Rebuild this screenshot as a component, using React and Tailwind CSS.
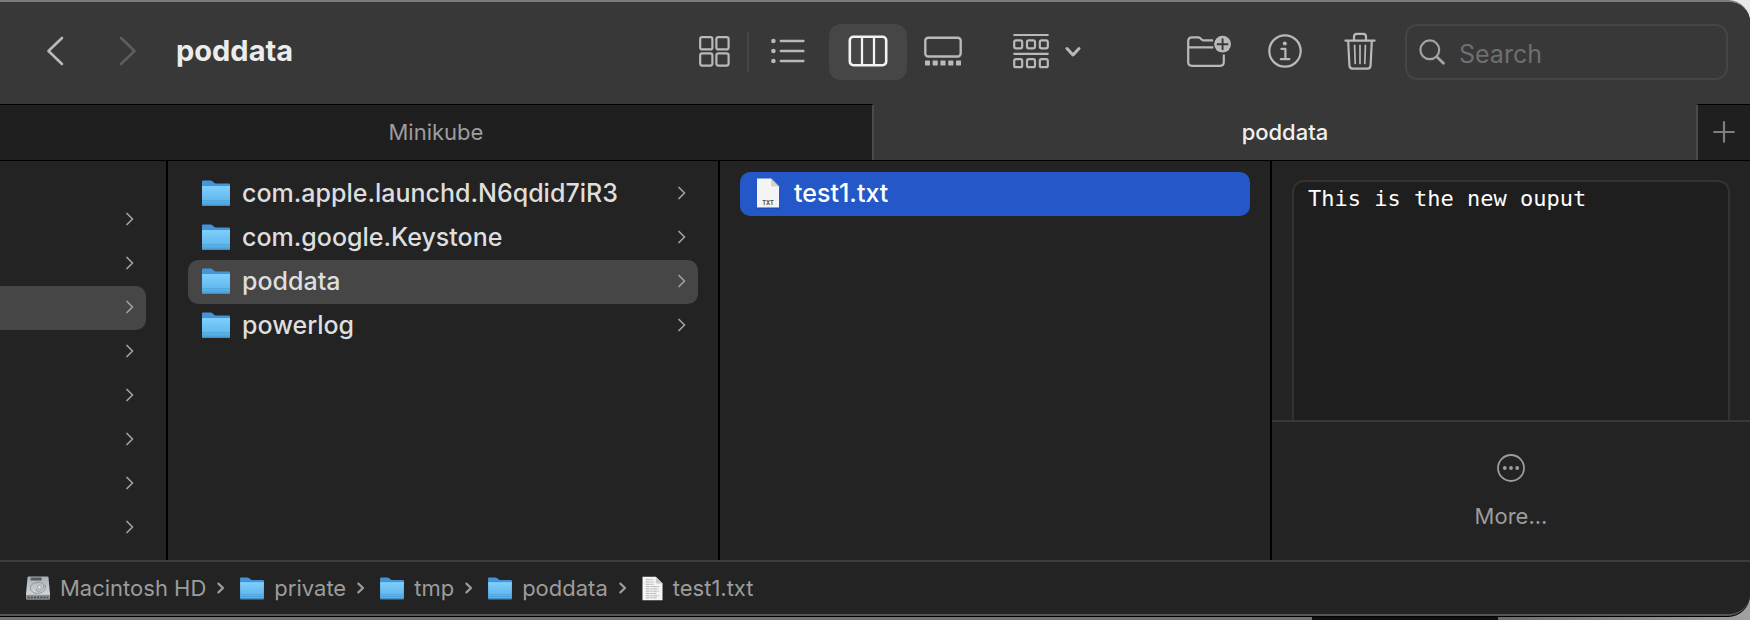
import React from "react";

function Chevron({ className = "" }) {
  return (
    <svg viewBox="0 0 8 14" fill="none" stroke="currentColor" strokeWidth="1.7" strokeLinecap="round" strokeLinejoin="round" className={"h-[14px] w-2 shrink-0 " + className} aria-hidden="true">
      <path d="M1 1.5 6.5 7 1 12.5" />
    </svg>
  );
}

function NavArrow({ flip = false }) {
  return (
    <svg viewBox="0 0 18 30" fill="none" stroke="currentColor" strokeWidth="2.6" strokeLinecap="round" strokeLinejoin="round" className="h-[30px] w-[18px]" aria-hidden="true">
      <path d={flip ? "M2 2 15.5 15 2 28" : "M16 2 2.5 15 16 28"} />
    </svg>
  );
}

function FolderIcon({ className }) {
  return (
    <svg viewBox="0 0 28 27" className={"shrink-0 " + className} aria-hidden="true">
      <defs>
        <linearGradient id="folderFront" x1="0" y1="0" x2="0" y2="1">
          <stop offset="0" stopColor="#7dcffb" />
          <stop offset="1" stopColor="#57aee9" />
        </linearGradient>
      </defs>
      <path d="M0 1.6Q0 .5 1.1.5H8.6Q9.6.5 10.4 1.2L12 2.7Q12.8 3.4 13.8 3.4H27Q28 3.4 28 4.4V10H0Z" fill="#4594d8" />
      <path d="M0 6.4H28V25Q28 26 27 26H1Q0 26 0 25Z" fill="url(#folderFront)" />
      <path d="M0 6.7H28" stroke="#8ad8ff" strokeWidth=".8" />
      <path d="M0 20.8H28M0 23H28" stroke="#4799d3" strokeWidth=".7" />
      <path d="M0 24.6H28V25Q28 26 27 26H1Q0 26 0 25Z" fill="#428fc8" />
    </svg>
  );
}

function TxtFileIcon() {
  return (
    <svg viewBox="0 0 28 32" className="h-8 w-7 shrink-0" aria-hidden="true">
      <path d="M3 2H17L25 10V31.6H3Z" fill="#143a86" opacity=".6" />
      <path d="M3 1.5H17L25 9.5V30.5H3Z" fill="#f4f4f4" />
      <path d="M17 1.5V8.5Q17 9.5 18 9.5H25Z" fill="#d4d4d4" />
      <path d="M17 1.5 25 9.5" stroke="#a9a9a9" strokeWidth=".8" />
      <text x="14" y="27.6" textAnchor="middle" fontSize="5.6" fontWeight="700" fontFamily="Inter, sans-serif" fill="#4a4a4a">TXT</text>
    </svg>
  );
}

function DocIcon() {
  return (
    <svg viewBox="0 0 22 26" className="h-[25px] w-[21px] shrink-0" aria-hidden="true">
      <path d="M.5 .8H14.5L21.5 7.8V25.2H.5Z" fill="#f5f5f5" />
      <path d="M14.5.8V6.8Q14.5 7.8 15.5 7.8H21.5Z" fill="#c9c9c9" />
      <path d="M4 3.8H12M4 6.2H12.5M4 8.6H12.5M4 11H18M4 13.4H17M4 15.8H18M4 18.2H15M4 20.6H18M4 22.8H16" stroke="#b0b0b0" strokeWidth="1" strokeDasharray="4 .7 2.4 .5" />
    </svg>
  );
}

function DriveIcon() {
  return (
    <svg viewBox="0 0 24 25" className="h-[25px] w-6 shrink-0" aria-hidden="true">
      <defs>
        <linearGradient id="drive" x1="0" y1="0" x2="0" y2="1">
          <stop offset="0" stopColor="#a9b0b4" />
          <stop offset="1" stopColor="#d3d8db" />
        </linearGradient>
      </defs>
      <path d="M2.6.5H21.4Q22.3.5 22.5 1.6L24 18V19.6H0V18L1.5 1.6Q1.7.5 2.6.5Z" fill="url(#drive)" />
      <path d="M0 18.8H24V22.6Q24 23.8 22.8 23.8H1.2Q0 23.8 0 22.6Z" fill="#8d9498" />
      <path d="M1.5 21.5H22.5" stroke="#4b4f52" strokeWidth="2.2" strokeDasharray="2.2 1" />
      <rect x="4.6" y="1.6" width="11" height="3" rx=".6" fill="#555b5f" />
      <path d="M19 8.5Q21 14.5 15 16.8Q8 18.8 5 14.5Q3 10 7.5 7.4Q11 5.8 14.5 6.4M14.5 6.4Q19 8 17.5 12Q15.5 15.6 11.5 15.4Q9 14.6 11 12.6" fill="none" stroke="#8b9297" strokeWidth=".9" />
      <circle cx="13.4" cy="11.2" r="1.8" fill="#dfe3e5" stroke="#8b9297" strokeWidth=".6" />
    </svg>
  );
}

function GridIcon() {
  return (
    <svg viewBox="0 0 31 31" fill="none" stroke="currentColor" strokeWidth="2.2" className="h-[31px] w-[31px]" aria-hidden="true">
      <rect x="1.2" y="1.2" width="12.2" height="12.2" rx="2" />
      <rect x="17.4" y="1.2" width="12.2" height="12.2" rx="2" />
      <rect x="1.2" y="17.4" width="12.2" height="12.2" rx="2" />
      <rect x="17.4" y="17.4" width="12.2" height="12.2" rx="2" />
    </svg>
  );
}

function ListIcon() {
  return (
    <svg viewBox="0 0 34 26" fill="none" stroke="currentColor" strokeWidth="2.4" strokeLinecap="round" className="h-[26px] w-[34px]" aria-hidden="true">
      <path d="M9.8 3H32.4M9.8 13H32.4M9.8 23H32.4" />
      <g fill="currentColor" stroke="none">
        <circle cx="2.4" cy="3" r="2.3" />
        <circle cx="2.4" cy="13" r="2.3" />
        <circle cx="2.4" cy="23" r="2.3" />
      </g>
    </svg>
  );
}

function ColumnsIcon() {
  return (
    <svg viewBox="0 0 40 32" fill="none" stroke="currentColor" strokeWidth="2.6" className="h-8 w-10" aria-hidden="true">
      <rect x="1.8" y="1.8" width="36.4" height="28.4" rx="3.6" />
      <path d="M14 2V30M26 2V30" strokeWidth="2.3" />
    </svg>
  );
}

function GalleryIcon() {
  return (
    <svg viewBox="0 0 38 30" fill="none" stroke="currentColor" strokeWidth="2.4" className="h-[30px] w-[38px]" aria-hidden="true">
      <rect x="1.3" y="1.7" width="35.4" height="18.8" rx="3" />
      <g fill="currentColor" stroke="none">
        <rect x="1" y="24.4" width="5" height="5" rx=".6" />
        <rect x="8.6" y="24.4" width="5.2" height="5" rx=".6" />
        <rect x="16.4" y="24.4" width="5.2" height="5" rx=".6" />
        <rect x="24.2" y="24.4" width="5.2" height="5" rx=".6" />
        <rect x="32" y="24.4" width="5" height="5" rx=".6" />
      </g>
    </svg>
  );
}

function GroupIcon() {
  return (
    <svg viewBox="0 0 36 36" fill="none" stroke="currentColor" strokeWidth="2.2" strokeLinecap="round" className="h-9 w-9" aria-hidden="true">
      <path d="M1.2 2H34.8M1.2 20.8H34.8" />
      <rect x="1.2" y="7.4" width="8" height="8" rx="1.8" />
      <rect x="14" y="7.4" width="8" height="8" rx="1.8" />
      <rect x="26.8" y="7.4" width="8" height="8" rx="1.8" />
      <rect x="1.2" y="26.2" width="8" height="8" rx="1.8" />
      <rect x="14" y="26.2" width="8" height="8" rx="1.8" />
      <rect x="26.8" y="26.2" width="8" height="8" rx="1.8" />
    </svg>
  );
}

function ChevronDownIcon() {
  return (
    <svg viewBox="0 0 16 12" fill="none" stroke="currentColor" strokeWidth="3" strokeLinecap="round" strokeLinejoin="round" className="h-3 w-4" aria-hidden="true">
      <path d="M2 3.5 8 10 14 3.5" />
    </svg>
  );
}

function NewFolderIcon() {
  return (
    <svg viewBox="0 0 44 32" fill="none" stroke="currentColor" strokeWidth="2.2" strokeLinecap="butt" strokeLinejoin="round" className="h-8 w-11" aria-hidden="true">
      <path d="M26 5.4H17Q15.6 5.4 14.6 4.5L13.4 3.2Q12.4 2.3 11 2.3H5Q1.2 2.3 1.2 6V27Q1.2 30.8 5 30.8H33Q36.8 30.8 36.8 27V19.6" />
      <path d="M1.2 12.3H26.4" />
      <circle cx="35.6" cy="9.2" r="8.4" fill="currentColor" stroke="none" />
      <path d="M35.6 4.2V14.2M30.6 9.2H40.6" stroke="#383838" strokeWidth="1.9" strokeLinecap="round" />
    </svg>
  );
}

function InfoIcon() {
  return (
    <svg viewBox="0 0 34 34" fill="none" stroke="currentColor" strokeWidth="2.2" className="h-[34px] w-[34px]" aria-hidden="true">
      <circle cx="17" cy="17" r="15.7" />
      <circle cx="16.8" cy="9.4" r="2" fill="currentColor" stroke="none" />
      <path d="M13.4 14.8H17.4V25M12.8 25.1H21.4" strokeLinecap="round" strokeLinejoin="round" />
    </svg>
  );
}

function TrashIcon() {
  return (
    <svg viewBox="0 0 32 38" fill="none" stroke="currentColor" strokeWidth="2.2" strokeLinecap="round" strokeLinejoin="round" className="h-[38px] w-8" aria-hidden="true">
      <path d="M1.4 8.6H30.6" />
      <path d="M10 8.4V4.6Q10 1.8 12.8 1.8H19.2Q22 1.8 22 4.6V8.4" />
      <path d="M4.2 9 5.4 33.4Q5.6 36.6 8.6 36.6H23.4Q26.4 36.6 26.6 33.4L27.8 9" />
      <path d="M10.6 13.4 11.2 31.4M16 13.4V31.4M21.4 13.4 20.8 31.4" strokeWidth="1.7" />
    </svg>
  );
}

function SearchIcon() {
  return (
    <svg viewBox="0 0 26 26" fill="none" stroke="currentColor" strokeWidth="2.2" strokeLinecap="round" className="h-[26px] w-[26px] shrink-0" aria-hidden="true">
      <circle cx="10.8" cy="10.8" r="9.4" />
      <path d="M17.8 17.8 24.4 24.2" strokeWidth="2.8" />
    </svg>
  );
}

function MoreIcon() {
  return (
    <svg viewBox="0 0 28 28" className="h-7 w-7" aria-hidden="true">
      <circle cx="14" cy="14" r="13" fill="none" stroke="currentColor" strokeWidth="1.8" />
      <g fill="currentColor">
        <circle cx="7.8" cy="14" r="1.9" />
        <circle cx="14" cy="14" r="1.9" />
        <circle cx="20.2" cy="14" r="1.9" />
      </g>
    </svg>
  );
}

const folders = ["com.apple.launchd.N6qdid7iR3", "com.google.Keystone", "poddata", "powerlog"];
const path = [
  { name: "Macintosh HD", kind: "drive" },
  { name: "private", kind: "folder" },
  { name: "tmp", kind: "folder" },
  { name: "poddata", kind: "folder" },
  { name: "test1.txt", kind: "doc" },
];

function Toolbar() {
  return (
    <header className="flex items-center bg-[#383838] pt-[22px] pr-[22px] pb-6 text-[#b9b9b9]">
      <div className="flex h-14 min-w-0 flex-1 items-center pb-[2px] pl-[46px]">
        <button type="button" aria-label="Back" className="pr-[55px]"><NavArrow /></button>
        <button type="button" aria-label="Forward" disabled className="pr-[39px] text-[#5e5e5e]"><NavArrow flip /></button>
        <h1 className="text-[29px] leading-8 font-bold text-[#ececec]">poddata</h1>
      </div>
      <div className="flex h-14 items-center">
        <button type="button" aria-label="Icon view" className="flex h-14 w-[66px] items-center justify-center pb-[2px]"><GridIcon /></button>
        <span className="h-10 w-[2px] bg-[#464646]" />
        <button type="button" aria-label="List view" className="flex h-14 w-20 items-center justify-center pr-[2px] pb-[2px]"><ListIcon /></button>
        <button type="button" aria-label="Column view" aria-pressed="true" className="flex h-14 w-[78px] items-center justify-center rounded-xl bg-[#464646] pb-[2px] text-[#f2f2f2]"><ColumnsIcon /></button>
        <button type="button" aria-label="Gallery view" className="flex h-14 w-[72px] items-center justify-center pb-[2px]"><GalleryIcon /></button>
      </div>
      <button type="button" aria-label="Group items" className="ml-[18px] flex h-14 items-center gap-4 px-4 pb-[2px]"><GroupIcon /><ChevronDownIcon /></button>
      <div className="ml-[72px] flex items-center">
        <button type="button" aria-label="New folder" className="flex h-14 w-20 items-center justify-center pb-[2px]"><NewFolderIcon /></button>
        <button type="button" aria-label="Get info" className="flex h-14 w-[72px] items-center justify-center pb-[2px]"><InfoIcon /></button>
        <button type="button" aria-label="Move to Trash" className="flex h-14 w-[78px] items-center justify-center pb-[2px]"><TrashIcon /></button>
      </div>
      <label className="ml-[6px] flex h-14 w-[323px] items-center gap-[14px] rounded-xl border-2 border-[#454545] px-3 text-[#a4a4a4]">
        <SearchIcon />
        <input type="search" aria-label="Search" placeholder="Search" className="w-full min-w-0 bg-transparent pt-1 text-[25px] leading-8 text-[#e4e4e4] outline-none placeholder:text-[#6f6f6f]" />
      </label>
    </header>
  );
}

function Tabs() {
  return (
    <div role="tablist" className="flex h-[57px] border-b border-black bg-[#383838] text-[22px] leading-7">
      <button type="button" role="tab" aria-selected="false" className="min-w-0 flex-[874] border-t border-r-2 border-t-black border-r-[#4a4a4a] bg-[#1f1f1f] pb-[2px] text-[#9d9d9d]">Minikube</button>
      <button type="button" role="tab" aria-selected="true" className="min-w-0 flex-[824] font-medium text-[#f0f0f0]">poddata</button>
      <button type="button" aria-label="New tab" className="flex w-[54px] items-center justify-center border-t border-l-2 border-t-black border-l-[#4a4a4a] bg-[#1f1f1f] pb-px text-[#7e7e7e]">
        <svg viewBox="0 0 22 22" fill="none" stroke="currentColor" strokeWidth="2.2" strokeLinecap="round" className="h-[22px] w-[22px]" aria-hidden="true"><path d="M11 1.2V20.8M1.2 11H20.8" /></svg>
      </button>
    </div>
  );
}

function ParentColumn() {
  return (
    <ul aria-label="Parent folder" className="w-[168px] shrink-0 border-r-2 border-black pt-[37px] pr-5">
      {[0, 1, 2, 3, 4, 5, 6, 7].map((i) => (
        <li key={i}>
          <button type="button" aria-label={"Folder " + (i + 1)} className={"flex h-11 w-full items-center justify-end pr-3 pb-[2px] text-[#a0a0a0] " + (i === 2 ? "rounded-r-[10px] bg-[#464646]" : "")}>
            <Chevron />
          </button>
        </li>
      ))}
    </ul>
  );
}

function FolderColumn() {
  return (
    <ul className="min-w-0 flex-1 border-r-2 border-black px-5 pt-[11px]">
      {folders.map((name) => (
        <li key={name}>
          <button type="button" className={"flex h-11 w-full items-center gap-3 pr-3 pb-[2px] pl-[14px] text-left text-[25px] leading-8 font-medium text-[#dedede] " + (name === "poddata" ? "rounded-[10px] bg-[#464646]" : "")}>
            <FolderIcon className="h-[27px] w-7" />
            <span className="min-w-0 flex-1">{name}</span>
            <Chevron className="text-[#a0a0a0]" />
          </button>
        </li>
      ))}
    </ul>
  );
}

function FileColumn() {
  return (
    <ul className="min-w-0 flex-1 border-r-2 border-black px-5 pt-[11px]">
      <li>
        <button type="button" className="flex h-11 w-full items-center gap-3 rounded-[10px] bg-[#2458c8] pb-[2px] pl-[14px] text-left text-[25px] leading-8 font-medium text-white">
          <TxtFileIcon />
          <span>test1.txt</span>
        </button>
      </li>
    </ul>
  );
}

function Preview() {
  return (
    <section aria-label="Preview" className="flex w-[478px] shrink-0 flex-col">
      <div className="flex flex-1 flex-col px-5 pt-[19px]">
        <pre className="flex-1 rounded-t-xl border-2 border-b-0 border-[#323232] bg-[#1e1e1e] px-[14px] pt-[3px] font-['DejaVu_Sans_Mono',monospace] text-[22px] leading-7 text-white">This is the new ouput</pre>
      </div>
      <div className="flex h-[140px] justify-center border-t-2 border-[#383838] pt-8 text-[#9c9c9c]">
        <button type="button" className="flex flex-col items-center gap-5 self-start text-[22px] leading-7"><MoreIcon />More...</button>
      </div>
    </section>
  );
}

function PathBar() {
  return (
    <nav aria-label="Path" className="border-t-2 border-[#3d3d3d] pl-[26px] text-[#9c9c9c]">
      <ol className="flex h-[52px] items-center text-[22px] leading-7">
        {path.map((p, i) => (
          <li key={p.name} className="flex items-center">
            {i > 0 && (
              <svg viewBox="0 0 8 12" fill="none" stroke="currentColor" strokeWidth="2.2" strokeLinecap="round" strokeLinejoin="round" className="mr-[15px] ml-[11px] h-3 w-2" aria-hidden="true"><path d="M1.4 1.6 6 6 1.4 10.4" /></svg>
            )}
            <a href={"#" + p.name.replace(" ", "-")} className="flex items-center gap-[10px]">
              {p.kind === "drive" && <DriveIcon />}
              {p.kind === "folder" && <FolderIcon className="h-[23px] w-6" />}
              {p.kind === "doc" && <DocIcon />}
              {p.name}
            </a>
          </li>
        ))}
      </ol>
    </nav>
  );
}

export default function App() {
  return (
    <div className="flex min-h-screen flex-col bg-linear-to-b from-[#e8e8e8] to-[#a0a0a0] font-['Inter',sans-serif]">
      <main className="flex flex-1 flex-col overflow-hidden rounded-r-[22px] border-t-2 border-b-2 border-t-[#7b7b7b] border-b-[#555555] bg-[#232323] shadow-[0_1px_0_#000]">
        <Toolbar />
        <Tabs />
        <div className="flex flex-1">
          <ParentColumn />
          <FolderColumn />
          <FileColumn />
          <Preview />
        </div>
        <PathBar />
      </main>
      <div className="mt-px flex h-[3px]">
        <div className="flex-[1312] bg-[#737373]" />
        <div className="flex-[186] bg-[#0f0f0f]" />
        <div className="flex-[252] bg-linear-to-r from-[#6b6b6b] to-[#a0a0a0]" />
      </div>
    </div>
  );
}
